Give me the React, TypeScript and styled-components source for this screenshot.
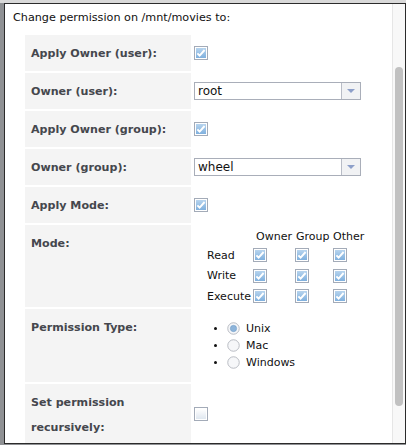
import React from 'react'
import styled, { createGlobalStyle } from 'styled-components'

const Global = createGlobalStyle`
  html, body { margin: 0; padding: 0; }
  body {
    width: 406px;
    height: 445px;
    overflow: hidden;
    background: #8f9194;
    font-family: "DejaVu Sans", Verdana, sans-serif;
  }
`

const Backdrop = styled.div`
  width: 406px;
  height: 445px;
  box-sizing: border-box;
  padding: 3px 0 0 4px;
  background: linear-gradient(#d9d9d9 0 3px, #8f9194 3px);
`

const Dialog = styled.div`
  width: 402px;
  height: 441px;
  box-sizing: border-box;
  background: #fff;
  border: 1px solid #2b2b2b;
  display: flex;
`

const Content = styled.div`
  flex: 1;
  overflow: hidden;
  padding: 7px 0 0 8px;
`

const Title = styled.div`
  font-size: 11.2px;
  color: #111;
  line-height: 13px;
  margin-bottom: 11px;
`

const Form = styled.div`
  margin-left: 12px;
  display: grid;
  grid-template-columns: 166px 197px;
  row-gap: 2px;
  column-gap: 2px;
`

const Label = styled.div`
  background: #f4f4f4;
  color: #45474d;
  font-weight: bold;
  font-size: 11.1px;
  line-height: 25px;
  padding: 6px 6px 5px 6px;
`

const Value = styled.div`
  display: flex;
  align-items: center;
  padding-left: 1px;
`

const Box = styled.svg`
  display: block;
  width: 14px;
  height: 14px;
`

function Check({ on = true }: { on?: boolean }) {
  return (
    <Box viewBox="0 0 14 14">
      <defs>
        <linearGradient id={on ? 'cg' : 'ug'} x1="0" y1="0" x2="0" y2="1">
          {on ? (
            <>
              <stop offset="0" stopColor="#b7d4ee" />
              <stop offset="1" stopColor="#7fb0de" />
            </>
          ) : (
            <>
              <stop offset="0" stopColor="#ffffff" />
              <stop offset="1" stopColor="#dfe7f0" />
            </>
          )}
        </linearGradient>
      </defs>
      <rect x="0.5" y="0.5" width="13" height="13" fill="#fff" stroke="#a3abb8" />
      <rect x="2" y="2" width="10" height="10" fill={`url(#${on ? 'cg' : 'ug'})`} />
      {on && (
        <path d="M3.4 7.4 L5.6 9.6 L10.6 4" fill="none" stroke="#fff" strokeWidth="1.9" />
      )}
    </Box>
  )
}

const Select = styled.div`
  width: 167px;
  height: 18px;
  box-sizing: border-box;
  border: 1px solid #a9aeb9;
  display: flex;
  font-size: 12px;
  color: #111;
`

const SelectText = styled.div`
  flex: 1;
  padding-left: 3px;
  line-height: 16px;
`

const SelectArrow = styled.div`
  width: 18px;
  border-left: 1px solid #b8bcc6;
  background: #f1f2f4;
  display: flex;
  align-items: center;
  justify-content: center;
  &::after {
    content: '';
    border-left: 4px solid transparent;
    border-right: 4px solid transparent;
    border-top: 4px solid #8d9fc9;
  }
`

const ModeGrid = styled.div`
  display: grid;
  grid-template-columns: 46px 42px 38px auto;
  grid-auto-rows: 20.5px;
  grid-template-rows: 18px;
  padding: 2px 0 0 13px;
  align-self: flex-start;
  font-size: 11px;
  color: #111;
  align-items: center;
`

const Head = styled.div<{ $shift?: number }>`
  padding-left: ${p => p.$shift ?? 0}px;
`

const RowName = styled.div``

const Options = styled.ul`
  margin: 11px 0 11px 0;
  padding-left: 33px;
  font-size: 11px;
  color: #111;
  list-style: disc;
`

const Option = styled.li`
  height: 17px;
  line-height: 17px;
  &::marker { font-size: 10px; }
`

const OptionInner = styled.span`
  display: inline-flex;
  align-items: center;
  gap: 6px;
  vertical-align: top;
  height: 17px;
`

function Radio({ on }: { on?: boolean }) {
  return (
    <Box viewBox="0 0 14 14" style={{ width: 13, height: 13 }}>
      <circle cx="7" cy="7" r="6.2" fill="#f6f7f9" stroke="#b4b8bf" />
      {on && <circle cx="7" cy="7" r="3.4" fill="#8db4da" stroke="#6e9bc7" strokeWidth="0.6" />}
    </Box>
  )
}

const Scrollbar = styled.div`
  width: 13px;
  border-left: 1px solid #e6e6e6;
  background: #f8f8f8;
  padding-top: 63px;
  box-sizing: border-box;
  display: flex;
  justify-content: center;
`

const Thumb = styled.div`
  width: 8px;
  height: 339px;
  border-radius: 4px;
  background: #c1c1c1;
`

export default function App() {
  return (
    <>
      <Global />
      <Backdrop>
        <Dialog>
          <Content>
            <Title>Change permission on /mnt/movies to:</Title>
            <Form>
              <Label>Apply Owner (user):</Label>
              <Value><Check /></Value>
              <Label>Owner (user):</Label>
              <Value>
                <Select><SelectText>root</SelectText><SelectArrow /></Select>
              </Value>
              <Label>Apply Owner (group):</Label>
              <Value><Check /></Value>
              <Label>Owner (group):</Label>
              <Value>
                <Select><SelectText>wheel</SelectText><SelectArrow /></Select>
              </Value>
              <Label>Apply Mode:</Label>
              <Value><Check /></Value>
              <Label>Mode:</Label>
              <Value>
                <ModeGrid>
                  <span />
                  <Head $shift={3}>Owner</Head>
                  <Head $shift={1}>Group</Head>
                  <Head>Other</Head>
                  {['Read', 'Write', 'Execute'].map(r => (
                    <React.Fragment key={r}>
                      <RowName>{r}</RowName>
                      <Check />
                      <Check />
                      <Check />
                    </React.Fragment>
                  ))}
                </ModeGrid>
              </Value>
              <Label>Permission Type:</Label>
              <Value>
                <Options>
                  <Option><OptionInner><Radio on />Unix</OptionInner></Option>
                  <Option><OptionInner><Radio />Mac</OptionInner></Option>
                  <Option><OptionInner><Radio />Windows</OptionInner></Option>
                </Options>
              </Value>
              <Label>Set permission<br />recursively:</Label>
              <Value><Check on={false} /></Value>
            </Form>
          </Content>
          <Scrollbar><Thumb /></Scrollbar>
        </Dialog>
      </Backdrop>
    </>
  )
}
